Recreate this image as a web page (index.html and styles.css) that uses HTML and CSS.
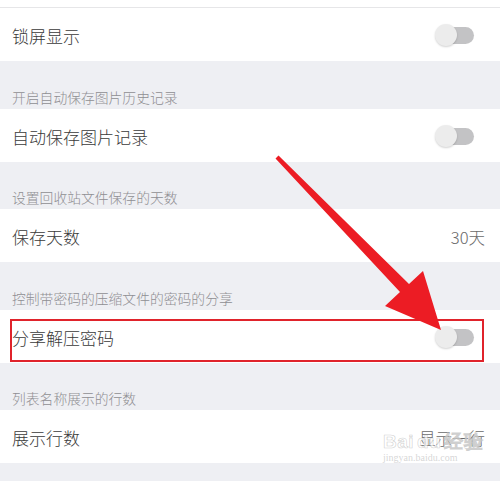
FILE: index.html
```html
<!DOCTYPE html>
<html lang="zh">
<head>
<meta charset="utf-8">
<link rel="stylesheet" href="styles.css">
</head>
<body>
<div class="page">
  <div class="top-strip"></div>
  <div class="row row-first">
    <span class="label">锁屏显示</span>
    <span class="toggle"><span class="track"></span><span class="knob"></span></span>
  </div>
  <div class="header h48">开启自动保存图片历史记录</div>
  <div class="row">
    <span class="label">自动保存图片记录</span>
    <span class="toggle"><span class="track"></span><span class="knob"></span></span>
  </div>
  <div class="header h47">设置回收站文件保存的天数</div>
  <div class="row">
    <span class="label">保存天数</span>
    <span class="value">30天</span>
  </div>
  <div class="header h48">控制带密码的压缩文件的密码的分享</div>
  <div class="row row-marked">
    <span class="label">分享解压密码</span>
    <span class="toggle"><span class="track"></span><span class="knob"></span></span>
    <div class="highlight"></div>
  </div>
  <div class="header h47">列表名称展示的行数</div>
  <div class="row row-last">
    <span class="label">展示行数</span>
    <span class="value">显示一行</span>
    <div class="watermark">
      <span class="wm-logo">Bai<span class="wm-du">du</span>经验</span>
      <span class="wm-url">jingyan.baidu.com</span>
    </div>
  </div>
  <div class="bottom"></div>
  <svg class="arrow" width="500" height="481" viewBox="0 0 500 481">
    <polygon points="275.5,158.5 278.5,155.5 409,284 423,271 441,330 385,306 400,292" fill="#ec1c24"/>
  </svg>
</div>
</body>
</html>
```
FILE: styles.css
```css
* { box-sizing: border-box; }
html, body { margin: 0; padding: 0; }
body {
  background: #eeeff3;
  font-family: "Noto Sans CJK SC", "Noto Sans", sans-serif;
  font-weight: 300;
  width: 500px;
  height: 481px;
  overflow: hidden;
}
.page {
  position: relative;
  width: 500px;
  height: 481px;
}
.top-strip {
  height: 8px;
  background: #fff;
  border-bottom: 1px solid #e6e6e8;
  box-shadow: 0 1px 1px rgba(0,0,0,0.03);
}
.row {
  position: relative;
  height: 53px;
  background: #fff;
  display: flex;
  align-items: center;
  justify-content: space-between;
  padding: 3px 15px 0 12px;
}
.label {
  font-size: 17px;
  color: #3a3a3a;
  line-height: 22px;
}
.value {
  font-size: 16.5px;
  color: #6a6a6a;
  line-height: 22px;
}
.header {
  display: flex;
  align-items: flex-end;
  padding: 0 0 2px 12px;
  font-size: 13.8px;
  line-height: 20px;
  color: #8e8e92;
}
.h48 { height: 48px; }
.h47 { height: 47px; }
.toggle {
  position: relative;
  width: 39px;
  height: 22px;
  margin-right: 11px;
  margin-top: -2px;
}
.track {
  position: absolute;
  left: 5px;
  top: 2.5px;
  width: 34px;
  height: 17px;
  border-radius: 9px;
  background: #c3c3c5;
}
.knob {
  position: absolute;
  left: 0;
  top: 0;
  width: 22px;
  height: 22px;
  border-radius: 50%;
  background: #ececec;
  box-shadow: 0 1px 2px rgba(0,0,0,0.18);
}
.highlight {
  position: absolute;
  left: 10px;
  top: 9px;
  width: 474px;
  height: 43px;
  border: 2px solid #e0232b;
}
.watermark {
  position: absolute;
  left: 383px;
  top: 22px;
  display: flex;
  flex-direction: column;
  line-height: 1;
  pointer-events: none;
}
.wm-logo {
  font-family: "Liberation Sans", sans-serif;
  font-weight: bold;
  font-size: 19px;
  color: rgba(255,255,255,0.7);
  -webkit-text-stroke: 0.6px rgba(160,160,160,0.5);
  letter-spacing: 0.5px;
}
.wm-du { margin: 0 3px; }
.wm-url {
  margin-top: 2px;
  font-family: "Liberation Serif", serif;
  font-size: 10px;
  color: rgba(180,180,180,0.55);
}
.bottom { height: 17px; }
.arrow {
  position: absolute;
  left: 0;
  top: 0;
  pointer-events: none;
}
```
